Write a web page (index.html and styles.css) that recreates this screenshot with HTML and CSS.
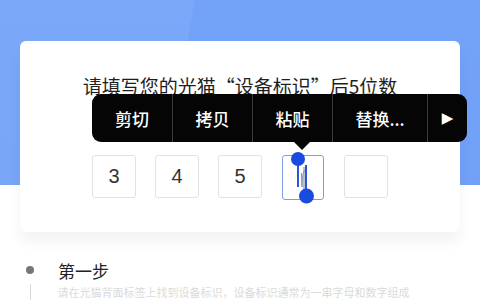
FILE: index.html
```html
<!DOCTYPE html>
<html lang="zh-CN">
<head>
<meta charset="utf-8">
<link rel="stylesheet" href="styles.css">
</head>
<body>
<div class="page">
  <div class="card">
    <div class="title">请填写您的光猫“设备标识”后5位数</div>
    <div class="code-row">
      <div class="box">3</div>
      <div class="box">4</div>
      <div class="box">5</div>
      <div class="box box-active"></div>
      <div class="box"></div>
    </div>
  </div>
  <div class="steps">
    <div class="step-head"><span class="dot"></span><span class="step-title">第一步</span></div>
    <div class="step-body"><span class="step-text">请在光猫背面标签上找到设备标识，设备标识通常为一串字母和数字组成</span></div>
  </div>
</div>

<div class="menu">
  <div class="menu-item w81">剪切</div>
  <div class="menu-item w80">拷贝</div>
  <div class="menu-item w80">粘贴</div>
  <div class="menu-item w95">替换...</div>
  <div class="menu-item menu-more">▶</div>
</div>
<div class="menu-tip"></div>

<svg class="selection" width="30" height="56" viewBox="0 0 30 56">
  <line x1="11" y1="8" x2="11" y2="36" stroke="#2a55d6" stroke-width="2"/>
  <path d="M17 16 L17 40 M14.5 22 L15 36" stroke="#8a96b8" stroke-width="1.2" fill="none"/>
  <path d="M15 36 Q15 20 19 18" stroke="#8a96b8" stroke-width="1" fill="none"/>
  <line x1="19" y1="14" x2="19" y2="46" stroke="#2a55d6" stroke-width="2"/>
  <circle cx="11" cy="8" r="7" fill="#1a4be0"/>
  <circle cx="19.5" cy="45" r="7.5" fill="#1a4be0"/>
</svg>
</body>
</html>
```

FILE: styles.css
```css
html, body {
  margin: 0;
  padding: 0;
}
body {
  width: 480px;
  height: 300px;
  overflow: hidden;
  position: relative;
  font-family: "Noto Sans CJK SC", "Noto Sans", sans-serif;
  background:
    linear-gradient(100deg, rgba(255,255,255,0.06) 0 38%, rgba(255,255,255,0) 38%) top / 100% 185px no-repeat,
    linear-gradient(to bottom, #73a3f8 0, #71a0f7 185px, #ffffff 185px, #ffffff 100%);
}
.page {
  display: flex;
  flex-direction: column;
  padding-top: 41px;
}
.card {
  margin: 0 20px;
  height: 191px;
  box-sizing: border-box;
  background: #fff;
  border-radius: 6px;
  box-shadow: 0 10px 14px rgba(0, 0, 0, 0.05);
  padding-top: 31px;
  display: flex;
  flex-direction: column;
  align-items: center;
}
.title {
  font-size: 19px;
  line-height: 27px;
  color: #1e1e1e;
}
.code-row {
  margin-top: 56px;
  display: flex;
  gap: 19px;
}
.box {
  width: 44px;
  height: 43px;
  box-sizing: border-box;
  border: 1px solid #e2e2e2;
  border-radius: 3px;
  display: flex;
  align-items: center;
  justify-content: center;
  font-family: "Liberation Sans", "Noto Sans", sans-serif;
  font-size: 20px;
  color: #333;
}
.box-active {
  width: 42px;
  height: 45px;
  border: 1.5px solid #7d9fdd;
  margin: 0 1px;
}
.steps {
  margin-top: 26px;
  padding-left: 26px;
  display: flex;
  flex-direction: column;
}
.step-head {
  display: flex;
  align-items: center;
  height: 24px;
}
.dot {
  width: 8px;
  height: 8px;
  border-radius: 50%;
  background: #767676;
}
.step-title {
  margin-left: 24px;
  font-size: 17px;
  color: #222;
}
.step-body {
  margin-top: 2px;
  margin-left: 3.5px;
  border-left: 1px solid #d8d8d8;
  padding-left: 27px;
  height: 16px;
}
.step-text {
  display: block;
  font-size: 11px;
  line-height: 16px;
  color: #dadada;
  white-space: nowrap;
}
.menu {
  position: absolute;
  left: 92px;
  top: 94px;
  width: 375px;
  height: 48px;
  background: #050505;
  border-radius: 9px;
  display: flex;
  overflow: hidden;
}
.menu-item {
  display: flex;
  align-items: center;
  justify-content: center;
  color: #fff;
  font-size: 17px;
  font-weight: 500;
  border-right: 1px solid #3c3c3c;
  box-sizing: border-box;
}
.w81 { width: 81px; }
.w80 { width: 80px; }
.w95 { width: 95px; }
.menu-more {
  flex: 1;
  border-right: none;
  font-size: 15px;
  font-family: "DejaVu Sans", sans-serif;
}
.menu-tip {
  position: absolute;
  left: 293px;
  top: 141px;
  width: 0;
  height: 0;
  border-left: 9px solid transparent;
  border-right: 9px solid transparent;
  border-top: 9px solid #050505;
}
.selection {
  position: absolute;
  left: 287px;
  top: 151px;
}
```
